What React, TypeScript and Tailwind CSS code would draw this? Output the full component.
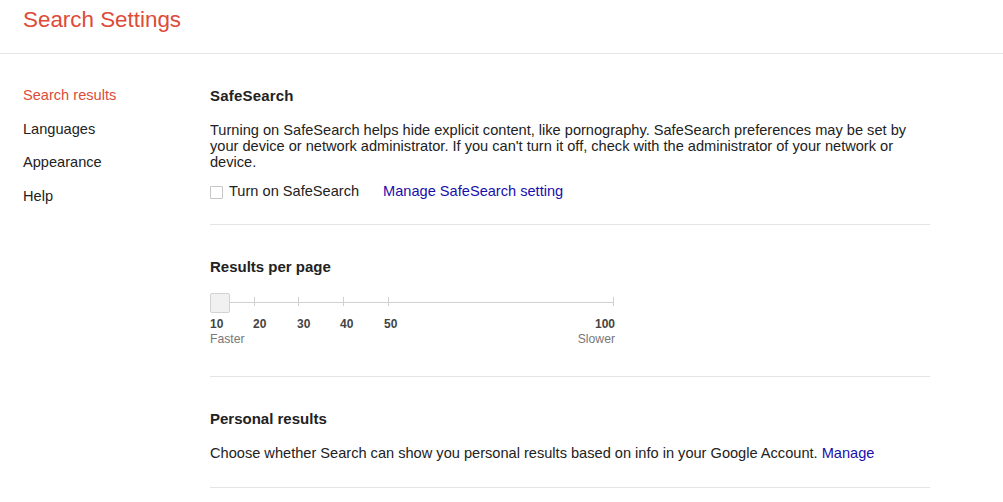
const ticks = [44, 88, 133, 178, 403];

const labels = [
  { text: "10", left: 0 },
  { text: "20", left: 43 },
  { text: "30", left: 87 },
  { text: "40", left: 130 },
  { text: "50", left: 174 },
];

const ResultsSlider = () => {
  return (
    <div className="w-[405px]">
      <div className="relative h-5">
        <div className="absolute left-0 right-[2px] top-[9px] h-px bg-[#d0d0d0]" />
        {ticks.map((x) => (
          <div
            key={x}
            className="absolute top-[4px] h-[9px] w-px bg-[#d0d0d0]"
            style={{ left: x }}
          />
        ))}
        <div className="absolute left-0 top-0 h-5 w-5 rounded-[2px] border border-[#d3d3d3] bg-[#f1f1f1]" />
      </div>
      <div className="relative mt-1 h-[14px] text-[12px] font-bold leading-[14px] text-[#444]">
        {labels.map((l) => (
          <span key={l.text} className="absolute top-0" style={{ left: l.left }}>
            {l.text}
          </span>
        ))}
        <span className="absolute right-0 top-0">100</span>
      </div>
      <div className="mt-px flex justify-between text-[12.2px] leading-[14px] text-[#777]">
        <span>Faster</span>
        <span>Slower</span>
      </div>
    </div>
  );
};

const SideNav = () => {
  const items = ["Search results", "Languages", "Appearance", "Help"];
  return (
    <nav className="w-[210px] shrink-0 pl-[23px] pt-[25px]">
      {items.map((item, i) => (
        <div
          key={item}
          className={
            i === 0
              ? "text-[14.6px] leading-[33.7px] text-[#dd4b39]"
              : "text-[14.6px] leading-[33.7px] text-[#222]"
          }
        >
          {item}
        </div>
      ))}
    </nav>
  );
};

export default function App() {
  return (
    <div className="min-h-[502px] bg-white font-['Liberation_Sans',Arial,sans-serif] text-[#222]">
      <header className="h-[54px] border-b border-[#e5e5e5] pl-[23px] pt-[7px]">
        <h1 className="text-[22.4px] leading-[26px] text-[#dd4b39]">Search Settings</h1>
      </header>

      <div className="flex">
        <SideNav />

        <main className="w-[720px]">
          <section className="border-b border-[#e5e5e5] pb-[24px] pt-[34px]">
            <h2 className="text-[15px] font-bold leading-4 tracking-[0.2px]">SafeSearch</h2>
            <p className="mt-[18px] text-[14.6px] leading-4">
              Turning on SafeSearch helps hide explicit content, like pornography. SafeSearch preferences may be set by
              your device or network administrator. If you can't turn it off, check with the administrator of your
              network or device.
            </p>
            <div className="mt-[14px] flex h-4 items-center text-[14.6px]">
              <label className="flex items-center gap-[6px]">
                <span className="h-[13px] w-[13px] rounded-[1px] border border-[#c6c6c6] bg-white" />
                <span>Turn on SafeSearch</span>
              </label>
              <a href="#" className="ml-6 text-[#1a0dab]">
                Manage SafeSearch setting
              </a>
            </div>
          </section>

          <section className="border-b border-[#e5e5e5] pb-[30px] pt-[34px]">
            <h2 className="text-[15px] font-bold leading-4">Results per page</h2>
            <div className="mt-[18px]">
              <ResultsSlider />
            </div>
          </section>

          <section className="border-b border-[#e5e5e5] pb-[26px] pt-[34px]">
            <h2 className="text-[15px] font-bold leading-4">Personal results</h2>
            <p className="mt-[18px] text-[14.6px] leading-4">
              Choose whether Search can show you personal results based on info in your Google Account.{" "}
              <a href="#" className="text-[#1a0dab]">
                Manage
              </a>
            </p>
          </section>
        </main>
      </div>
    </div>
  );
}
